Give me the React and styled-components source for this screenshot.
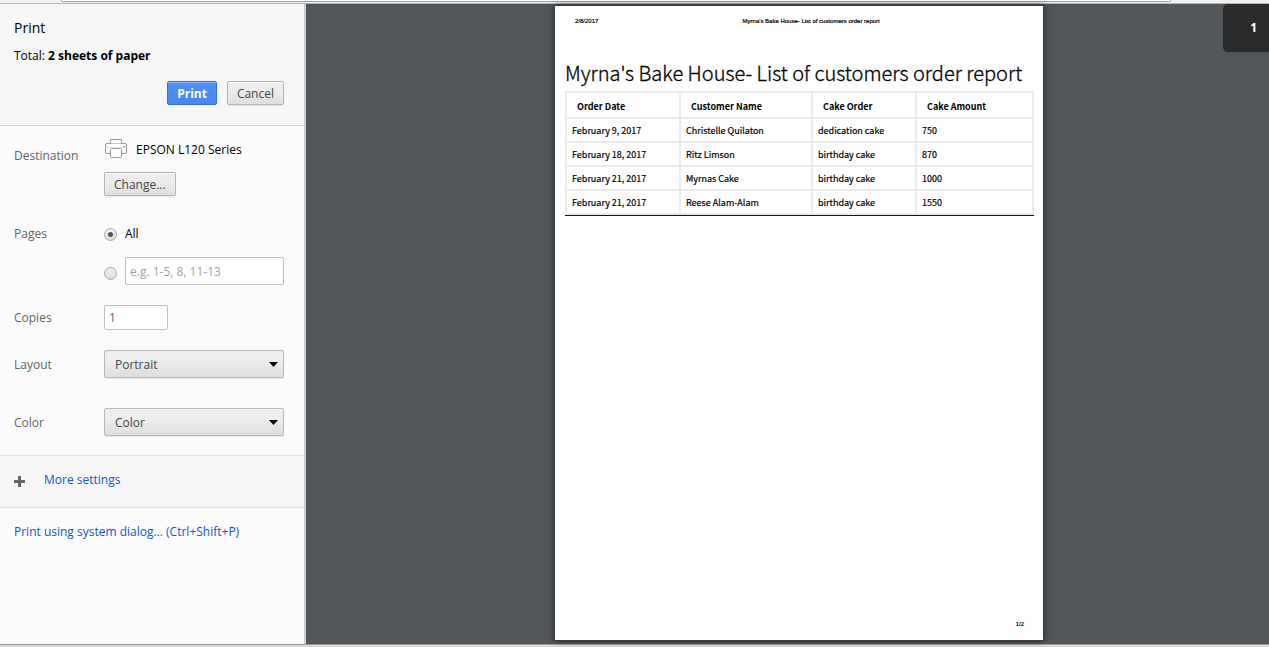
import React from "react";
import styled, { createGlobalStyle } from "styled-components";

const GlobalStyle = createGlobalStyle`
  *, *::before, *::after { box-sizing: border-box; }
  body {
    margin: 0;
    background: #f0f0f0;
    font: 12px/16px "Open Sans", "Noto Sans", sans-serif;
    color: #000;
  }
  button, input, select { font: inherit; }
`;

const Window = styled.div`
  display: flex;
  flex-direction: column;
  min-height: 100vh;
`;

const Toolbar = styled.div`
  height: 4px;
  padding: 0 98px 0 61px;
  background: #f0f0f0;
  border-bottom: 1px solid #b4b4b4;
`;

const AddressEdge = styled.div`
  height: 2px;
  background: #fff;
  border: 1px solid #a5a5a5;
  border-top: 0;
  border-radius: 0 0 2px 2px;
`;

const Dialog = styled.div`
  flex: 1;
  display: flex;
`;

const WindowEdge = styled.div`
  height: 3px;
  background: #d9d9d9;
  border-top: 1px solid #9f9f9f;
`;

const Sidebar = styled.aside`
  flex: 0 0 306px;
  background: #fbfbfb;
  border-right: 1px solid #d4d4d4;
  box-shadow: inset -1px 0 0 #c8c8c8;
`;

const Header = styled.header`
  margin-right: 1px;
  padding: 14px 20px 20px 14px;
  background: #f6f6f6;
  border-bottom: 1px solid #d2d2d2;
`;

const Title = styled.h1`
  margin: 0 0 10px;
  font-size: 14px;
  line-height: 20px;
  font-weight: 400;
`;

const Summary = styled.p`
  margin: 0 0 17px;
`;

const Actions = styled.div`
  display: flex;
  justify-content: flex-end;
  gap: 10px;
`;

const Button = styled.button`
  height: 24px;
  padding: 2px 9px 0;
  border: 1px solid ${(p) => (p.$primary ? "#2f6fe0" : "#b2b2b2")};
  border-radius: 2px;
  background: ${(p) =>
    p.$primary
      ? "linear-gradient(#4d90fe, #4787ee)"
      : "linear-gradient(#ededed 38%, #dedede)"};
  box-shadow: ${(p) =>
    p.$primary
      ? "inset 0 1px 1px rgba(255, 255, 255, 0.4)"
      : "0 1px 0 rgba(0, 0, 0, 0.08), inset 0 1px 2px rgba(255, 255, 255, 0.75)"};
  color: ${(p) => (p.$primary ? "#fff" : "#444")};
  font-weight: ${(p) => (p.$primary ? 700 : 400)};
`;

const Settings = styled.div`
  display: flex;
  flex-direction: column;
  gap: 20px;
  margin-right: 1px;
  padding: 12px 20px 19px 14px;
`;

const Row = styled.div`
  display: grid;
  grid-template-columns: 90px 1fr;
  align-items: ${(p) => (p.$top ? "start" : "center")};
  margin-bottom: ${(p) => (p.$apart ? "10px" : "0")};
`;

const Label = styled.label`
  padding-top: ${(p) => p.$drop || 0}px;
  color: #646464;
`;

const Stack = styled.div`
  display: flex;
  flex-direction: column;
  align-items: flex-start;
  gap: ${(p) => p.$gap}px;
`;

const Printer = styled.div`
  display: flex;
  align-items: center;
  gap: 8px;
  height: 22px;
`;

const PrinterName = styled.span`
  padding-top: 2px;
`;

const Choice = styled.div`
  display: flex;
  align-items: center;
  gap: 8px;
  width: 100%;
`;

const Radio = styled.input`
  appearance: none;
  flex: none;
  width: 13px;
  height: 13px;
  margin: ${(p) => p.$drop || 0}px 0 0;
  border: 1px solid #a8a8a8;
  border-radius: 50%;
  background: linear-gradient(#efefef, #dedede);
  &:checked {
    background: radial-gradient(circle, #555 2px, transparent 3px),
      linear-gradient(#efefef, #dedede);
  }
`;

const TextInput = styled.input`
  width: ${(p) => p.$width || "100%"};
  min-width: 0;
  height: ${(p) => p.$height}px;
  padding: 0 4px;
  border: 1px solid #bfbfbf;
  border-radius: 2px;
  background: #fff;
  color: #666;
  &::placeholder { color: #a5a5a5; opacity: 1; }
`;

const SelectBox = styled.div`
  display: grid;
  align-items: center;
  & > * { grid-area: 1 / 1; }
  & > svg { justify-self: end; margin-right: 6px; pointer-events: none; }
`;

const Select = styled.select`
  appearance: none;
  width: 100%;
  height: 28px;
  padding: 2px 20px 0 10px;
  border: 1px solid #b8b8b8;
  border-radius: 2px;
  background: linear-gradient(#ededed 38%, #dedede);
  box-shadow: 0 1px 0 rgba(0, 0, 0, 0.08);
  color: #444;
`;

const MoreSettings = styled.button`
  display: flex;
  align-items: center;
  gap: 18px;
  width: calc(100% - 1px);
  height: 53px;
  padding: 0 14px 4px;
  border: solid #dedede;
  border-width: 1px 0;
  background: #f6f6f6;
  color: #15c;
  & > svg { margin-top: 4px; }
`;

const SystemLink = styled.a`
  display: block;
  padding: 16px 14px;
  color: #15c;
  text-decoration: none;
`;

const Preview = styled.main`
  position: relative;
  flex: 1;
  display: flex;
  justify-content: center;
  align-items: flex-start;
  padding: 2px 0 4px 23px;
  background: #525659;
`;

const PageBadge = styled.div`
  position: absolute;
  top: 0;
  right: 0;
  width: 46px;
  height: 48px;
  padding: 0 12px;
  border-radius: 5px 0 0 5px;
  background: #2a2b2d;
  color: #fff;
  font: 700 12px/48px "Open Sans", sans-serif;
  text-align: right;
`;

const Paper = styled.article`
  display: flex;
  flex-direction: column;
  width: 488px;
  aspect-ratio: 488 / 634;
  padding: 10px 9px 11px 10px;
  background: #fff;
  box-shadow: 0 0 6px 1px rgba(0, 0, 0, 0.55);
  font-family: "Noto Sans CJK SC", sans-serif;
`;

const PageMargin = styled.div`
  display: grid;
  grid-template-columns: auto 1fr;
  padding: 0 10px;
  font: 6px/10px "Liberation Sans", Arial, sans-serif;
  text-align: ${(p) => p.$align};
  -webkit-text-stroke: 0.2px #000;
`;

const PageNumber = styled.span`
  grid-column: 2;
`;

const ReportTitle = styled.h2`
  margin: 32px 0 3px;
  font-size: 20px;
  line-height: 30px;
  font-weight: 300;
  -webkit-text-stroke: 0.3px #000;
  white-space: nowrap;
`;

const Table = styled.table`
  width: 100%;
  table-layout: fixed;
  border-collapse: collapse;
  font-size: 9px;
  line-height: 12px;
  text-align: left;
`;

const HeadCell = styled.th`
  width: ${(p) => p.$width};
  height: 26px;
  padding: 3px 10px 0;
  border: 2px solid #ebebeb;
  font-weight: 700;
`;

const Cell = styled.td`
  height: 24px;
  padding: 1px 5px 0;
  border: 2px solid #ebebeb;
  font-weight: 400;
  -webkit-text-stroke: 0.2px #000;
`;

const TableFrame = styled.div`
  margin-bottom: auto;
  border-bottom: 1px solid #111;
`;

const columns = [
  ["Order Date", "114px"],
  ["Customer Name", "132px"],
  ["Cake Order", "104px"],
  ["Cake Amount", "auto"],
];

const orders = [
  ["February 9, 2017", "Christelle Quilaton", "dedication cake", "750"],
  ["February 18, 2017", "Ritz Limson", "birthday cake", "870"],
  ["February 21, 2017", "Myrnas Cake", "birthday cake", "1000"],
  ["February 21, 2017", "Reese Alam-Alam", "birthday cake", "1550"],
];

const PrinterIcon = () => (
  <svg width="24" height="22" viewBox="0 0 24 22" fill="#fdfdfd" stroke="#999" aria-hidden="true">
    <rect x="1.5" y="5.5" width="21" height="10" rx="1.5" />
    <path d="M6.5 5.5v-4h11v4" />
    <path d="M2 9.500h20" stroke="#e2e2e2" />
    <rect x="6.5" y="10.500" width="11" height="9" rx="1" />
    <path d="M19 8.500h2" />
  </svg>
);

const PlusIcon = () => (
  <svg width="12" height="12" viewBox="0 0 12 12" aria-hidden="true">
    <path d="M4 0h3v4h4v3H7v4H4V7H0V4h4z" fill="#666" />
  </svg>
);

const Dropdown = ({ id, options }) => (
  <SelectBox>
    <Select id={id}>
      {options.map((o) => (
        <option key={o}>{o}</option>
      ))}
    </Select>
    <svg width="9" height="5" viewBox="0 0 9 5" aria-hidden="true">
      <path d="M0 0h9L4.500 5z" />
    </svg>
  </SelectBox>
);

export default function App() {
  return (
    <Window>
      <GlobalStyle />
      <Toolbar>
        <AddressEdge />
      </Toolbar>
      <Dialog>
        <Sidebar>
          <Header>
            <Title>Print</Title>
            <Summary>
              Total: <b>2 sheets of paper</b>
            </Summary>
            <Actions>
              <Button $primary>Print</Button>
              <Button>Cancel</Button>
            </Actions>
          </Header>
          <Settings>
            <Row $top $apart>
              <Label as="span" $drop={10}>Destination</Label>
              <Stack $gap={12}>
                <Printer>
                  <PrinterIcon />
                  <PrinterName>EPSON L120 Series</PrinterName>
                </Printer>
                <Button>Change...</Button>
              </Stack>
            </Row>
            <Row $top>
              <Label as="span">Pages</Label>
              <Stack $gap={15}>
                <Choice>
                  <Radio type="radio" name="pages" id="pages-all" defaultChecked />
                  <label htmlFor="pages-all">All</label>
                </Choice>
                <Choice>
                  <Radio $drop={4} type="radio" name="pages" aria-label="Page range" />
                  <TextInput $height={28} placeholder="e.g. 1-5, 8, 11-13" aria-label="Pages to print" />
                </Choice>
              </Stack>
            </Row>
            <Row>
              <Label htmlFor="copies">Copies</Label>
              <TextInput id="copies" $width="64px" $height={25} defaultValue="1" />
            </Row>
            <Row $apart>
              <Label $drop={2} htmlFor="layout">Layout</Label>
              <Dropdown id="layout" options={["Portrait", "Landscape"]} />
            </Row>
            <Row>
              <Label $drop={2} htmlFor="color">Color</Label>
              <Dropdown id="color" options={["Color", "Black and white"]} />
            </Row>
          </Settings>
          <MoreSettings>
            <PlusIcon />
            More settings
          </MoreSettings>
          <SystemLink href="#system-dialog">Print using system dialog... (Ctrl+Shift+P)</SystemLink>
        </Sidebar>
        <Preview>
          <Paper>
            <PageMargin $align="center">
              <span>2/8/2017</span>
              <span>Myrna's Bake House- List of customers order report</span>
            </PageMargin>
            <ReportTitle>Myrna's Bake House- List of customers order report</ReportTitle>
            <TableFrame>
              <Table>
                <thead>
                  <tr>
                    {columns.map(([name, width]) => (
                      <HeadCell key={name} $width={width}>{name}</HeadCell>
                    ))}
                  </tr>
                </thead>
                <tbody>
                  {orders.map((order, i) => (
                    <tr key={i}>
                      {order.map((value, j) => (
                        <Cell key={j}>{value}</Cell>
                      ))}
                    </tr>
                  ))}
                </tbody>
              </Table>
            </TableFrame>
            <PageMargin $align="right">
              <PageNumber>1/2</PageNumber>
            </PageMargin>
          </Paper>
          <PageBadge>1</PageBadge>
        </Preview>
      </Dialog>
      <WindowEdge />
    </Window>
  );
}
